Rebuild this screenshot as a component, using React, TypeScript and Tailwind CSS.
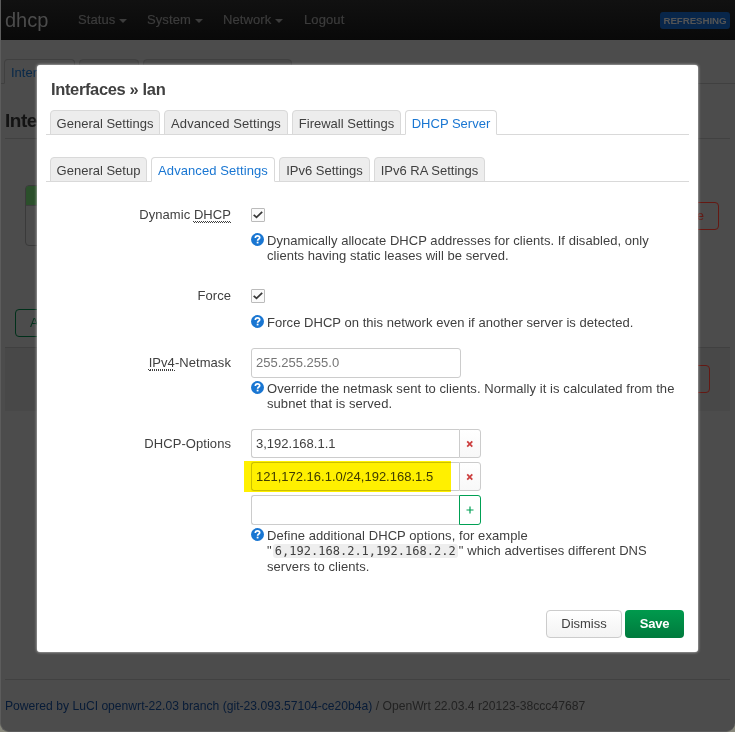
import React from "react";

const pageTabs = ["w-[71px]", "w-[60px]", "w-[149px]"];

function Caret() {
  return <span className="ml-[4px] mt-[1px] h-0 w-0 border-x-4 border-t-4 border-x-transparent border-t-[#3c3c3c]" />;
}

function Abbr({ children }: { children: React.ReactNode }) {
  return (
    <abbr className="inline-block h-[17px] border-b border-dotted border-[#404040] leading-[18px] underline decoration-dotted decoration-1 underline-offset-[2px]">
      {children}
    </abbr>
  );
}

function Tab({ label, active, width }: { label: string; active?: boolean; width: string }) {
  return (
    <li
      className={`${width} flex h-[25px] items-center justify-center whitespace-nowrap rounded-t-[4px] border border-[#d9d9d9] pt-[2px] ${
        active ? "border-b-white bg-white text-[#1976d2]" : "bg-[#ededed] text-[#404040]"
      }`}
    >
      {label}
    </li>
  );
}

function Help({ children }: { children: React.ReactNode }) {
  return (
    <div className="flex">
      <svg className="mr-[3px] h-[13px] w-[13px] shrink-0" viewBox="0 0 13 13">
        <circle cx="6.5" cy="6.5" r="6.5" fill="#1976d2" />
        <path d="M4.3 5C4.3 3.6 5.2 2.9 6.5 2.9C7.8 2.9 8.7 3.6 8.7 4.7C8.7 6.1 6.6 6 6.6 7.8" fill="none" stroke="white" strokeWidth="1.7" />
        <rect x="5.7" y="8.7" width="1.8" height="1.7" fill="white" />
      </svg>
      <div className="whitespace-nowrap leading-[15.4px]">{children}</div>
    </div>
  );
}

function Row({ label, className, children }: { label: React.ReactNode; className: string; children: React.ReactNode }) {
  return (
    <div className={`flex ${className}`}>
      <label className="mr-5 w-[185px] shrink-0 pt-[6px] text-right leading-[18px] tracking-[0.06px]">{label}</label>
      <div className="w-[438px]">{children}</div>
    </div>
  );
}

function Check() {
  return (
    <div className="mt-[8px] flex h-[14px] w-[14px] items-center justify-center rounded-[1px] border border-[#bbb] bg-[#fafafa]">
      <svg className="h-[12px] w-[12px]" viewBox="0 0 12 12">
        <path d="M1.7 5.8L4.5 8.3L10.2 2.9" fill="none" stroke="#383838" strokeWidth="1.8" />
      </svg>
    </div>
  );
}

function Option({ value, add, className = "" }: { value: string; add?: boolean; className?: string }) {
  return (
    <div className={`flex ${className}`}>
      <div className={`flex ${add ? "h-[30px]" : "h-[29px]"} w-[208px] items-center rounded-l-[3px] border border-r-0 border-[#ccc] bg-white pl-[4px]`}>{value}</div>
      <div
        className={`flex w-[22px] items-center justify-center rounded-r-[3px] border ${
          add ? "h-[30px] border-[#00a054]" : "h-[29px] border-[#ccc] bg-linear-to-b from-white to-[#f8f8f8] pt-[1px]"
        }`}
      >
        <svg className="h-[8px] w-[8px]" viewBox="0 0 8 8">
          {add ? (
            <path d="M4 .5V7.5M.5 4H7.5" stroke="#00a054" strokeWidth="1.2" />
          ) : (
            <path d="M1.2 1.3L6.3 6.7M6.3 1.3L1.2 6.7" stroke="#cc3e3e" strokeWidth="1.7" />
          )}
        </svg>
      </div>
    </div>
  );
}

export default function App() {
  return (
    <div className="relative h-[732px] w-[735px] overflow-hidden bg-[#88887c] font-['Liberation_Sans',Arial,sans-serif] text-[13px] leading-[18px] text-[#404040]">
      <div className="h-[732px] w-[735px] overflow-hidden rounded-b-[9px] border-b border-l border-[#5c5c5c] bg-[#4c4c4c]">
        <header className="flex h-10 items-center bg-linear-to-b from-[#111] to-[#090909] pr-[5px] text-[#3c3c3c]">
          <div className="w-[73px] pl-[4px] text-[20px] leading-5 text-[#4c4c4c]">dhcp</div>
          <nav className="flex flex-1 tracking-[0.1px] [-webkit-text-stroke:0.2px_#3c3c3c]">
            <div className="flex w-[69px] items-center pl-[4px]">Status<Caret /></div>
            <div className="flex w-[76px] items-center pl-[4px]">System<Caret /></div>
            <div className="flex w-[81px] items-center pl-[4px]">Network<Caret /></div>
            <div className="pl-[4px]">Logout</div>
          </nav>
          <div className="flex h-[17px] w-[70px] items-center justify-center rounded-[3px] bg-[#08264a] pt-px text-[9.75px] font-bold text-[#555] tracking-[-0.08px]">REFRESHING</div>
        </header>
        <div className="mt-[19px] flex h-[25px] gap-1 border-b border-[#404040] pl-[3px]">
          {pageTabs.map((width, i) => (
            <div key={width} className={`${width} h-[25px] rounded-t-[4px] border border-[#404040] pl-[6px] pt-[4px] leading-[18px] text-[#072849] ${i === 0 ? "border-b-[#4c4c4c] bg-[#4c4c4c]" : "bg-[#474747]"}`}>
              {i === 0 && "Interfaces"}
            </div>
          ))}
        </div>
        <main className="pl-[4px] pr-[5px]">
          <div className="h-[55px] border-b border-[#414141] pt-[26px]">
            <h2 className="text-[19px] font-bold leading-[22px] tracking-[-0.5px] text-[#131313]">Interfaces</h2>
          </div>
          <div className="flex h-[170px] items-start justify-between pl-[20px] pr-[11px] pt-[46px]">
            <div className="h-[61px] w-[100px] overflow-hidden rounded-[4px] border border-[#3a3a3a]">
              <div className="h-[20px] border-b border-[#3d3d3d] bg-[#2b4f2b]" />
            </div>
            <div className="mt-[17px] h-[28px] w-[60px] rounded-[4px] border border-[#641812] pr-[14px] text-right leading-[26px] text-[#641812]">Delete</div>
          </div>
          <div className="ml-[10px] flex h-[28px] w-[160px] items-center rounded-[4px] border border-[#00301a] pl-[14px] text-[#00301a]">
            Add new interface...
          </div>
          <div className="mt-[10px] flex h-[64px] justify-end border-t border-[#404040] bg-[#484848] pr-[20px] pt-[17px]">
            <div className="h-[28px] w-[60px] rounded-[4px] border border-[#641812]" />
          </div>
          <footer className="mt-[268px] border-t border-[#414141] pt-[17px] text-[12.13px] leading-[18px] text-[#222]">
            <span className="text-[#071b37]">Powered by LuCI openwrt-22.03 branch (git-23.093.57104-ce20b4a)</span> / OpenWrt 22.03.4 r20123-38ccc47687
          </footer>
        </main>
      </div>

      <section className="absolute left-[37px] top-[65px] h-[587px] w-[661px] rounded-[3px] bg-white pl-[9px] pr-[9px] pt-[14px] shadow-[0_0_3px_#ddd]">
        <h4 className="pl-[5px] text-[16.5px] font-bold leading-[20px] tracking-[-0.36px]">Interfaces » lan</h4>
        <ul className="mt-[11px] flex h-[25px] gap-1 border-b border-[#d9d9d9] pl-[4px]">
          <Tab label="General Settings" width="w-[110px]" />
          <Tab label="Advanced Settings" width="w-[124px] tracking-[0.08px]" />
          <Tab label="Firewall Settings" width="w-[109px]" />
          <Tab label="DHCP Server" width="w-[92px]" active />
        </ul>
        <ul className="mt-[22px] flex h-[25px] gap-1 border-b border-[#d9d9d9] pl-[4px]">
          <Tab label="General Setup" width="w-[97px]" />
          <Tab label="Advanced Settings" width="w-[124px] tracking-[0.08px]" active />
          <Tab label="IPv6 Settings" width="w-[91px]" />
          <Tab label="IPv6 RA Settings" width="w-[111px]" />
        </ul>
        <Row className="mt-[18px] h-[81px]" label={<>Dynamic <Abbr>DHCP</Abbr></>}>
          <Check />
          <div className="mt-[11px] tracking-[0.04px]"><Help>Dynamically allocate DHCP addresses for clients. If disabled, only<br />clients having static leases will be served.</Help></div>
        </Row>
        <Row className="h-[67px]" label="Force">
          <Check />
          <div className="mt-[12px] tracking-[0.04px]"><Help>Force DHCP on this network even if another server is detected.</Help></div>
        </Row>
        <Row className="h-[81px]" label={<><Abbr>IPv4</Abbr>-Netmask</>}>
          <div className="flex h-[30px] w-[210px] items-center rounded-[3px] border border-[#ccc] pl-[4px] text-[#757575]">255.255.255.0</div>
          <div className="mt-[3px] tracking-[0.07px]"><Help>Override the netmask sent to clients. Normally it is calculated from the<br />subnet that is served.</Help></div>
        </Row>
        <Row className="h-[181px]" label="DHCP-Options">
          <Option value="3,192.168.1.1" />
          <div className="relative mt-[4px]">
            <Option value="121,172.16.1.0/24,192.168.1.5" />
            <div className="absolute left-[-7px] top-[-1px] h-[31px] w-[207px] bg-[#fff000] mix-blend-multiply" />
          </div>
          <Option value="" add className="mt-[4px]" />
          <div className="mt-[3px] tracking-[0.07px]">
            <Help>
              Define additional DHCP options, for example<br />"<code className="mx-px rounded-[3px] bg-[#eee] px-[2px] font-['DejaVu_Sans_Mono',monospace] text-[12px] leading-[14px] tracking-[0.02px]">6,192.168.2.1,192.168.2.2</code>" which advertises different DNS<br />servers to clients.
            </Help>
          </div>
        </Row>
        <div className="flex justify-end gap-[3px] pr-[5px]">
          <button className="h-[28px] w-[76px] rounded-[4px] border border-[#ccc] bg-linear-to-b from-white to-[#f3f3f3]">Dismiss</button>
          <button className="h-[28px] w-[59px] rounded-[4px] bg-linear-to-b from-[#009a4d] to-[#007a3d] font-bold tracking-[-0.2px] text-white">Save</button>
        </div>
      </section>
    </div>
  );
}
